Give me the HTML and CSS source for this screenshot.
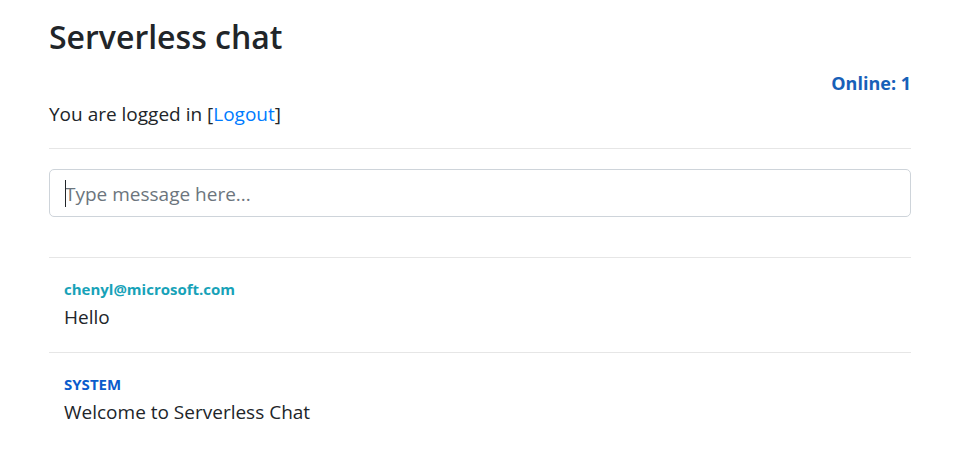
FILE: index.html
```html
<!DOCTYPE html>
<html lang="en">
<head>
<meta charset="utf-8">
<title>Serverless chat</title>
<link rel="stylesheet" href="styles.css">
</head>
<body>
<div class="container">
  <h1 class="title">Serverless chat</h1>
  <div class="online-row"><span class="online">Online: 1</span></div>
  <p class="lead">You are logged in [<a href="#" class="logout">Logout</a>]</p>
  <hr class="sep sep-top">
  <div class="input-wrap">
    <input class="message-input" type="text" placeholder="Type message here...">
  </div>
  <hr class="sep sep-list">
  <div class="message">
    <div class="sender sender-user">chenyl@microsoft.com</div>
    <div class="text">Hello</div>
  </div>
  <hr class="sep">
  <div class="message">
    <div class="sender sender-system">SYSTEM</div>
    <div class="text">Welcome to Serverless Chat</div>
  </div>
</div>
</body>
</html>
```
FILE: styles.css
```css
* { box-sizing: border-box; }
html, body { margin: 0; padding: 0; background: #fff; }
body {
  font-family: "Open Sans", "Noto Sans", "Liberation Sans", sans-serif;
  color: #212529;
}
.container {
  width: 862px;
  margin-left: 49px;
  padding-top: 13px;
}
.title {
  margin: 0 0 10px;
  font-size: 32px;
  line-height: 48px;
  font-weight: 600;
  color: #212529;
}
.online-row {
  display: flex;
  justify-content: flex-end;
  line-height: 24px;
  height: 24px;
}
.online {
  font-size: 18px;
  font-weight: 700;
  color: #1760b8;
}
.lead {
  margin: 4px 0 0;
  font-size: 19px;
  line-height: 30px;
}
.logout { color: #007bff; text-decoration: none; }
.sep {
  border: 0;
  border-top: 1px solid #e6e6e6;
  margin: 0;
  height: 0;
}
.sep-top { margin-top: 19px; }
.input-wrap {
  position: relative;
  margin-top: 20px;
}
.input-wrap::before {
  content: "";
  position: absolute;
  left: 16px;
  top: 11px;
  width: 1px;
  height: 27px;
  background: #212529;
}
.message-input {
  display: block;
  width: 100%;
  height: 48px;
  padding: 2px 15px 0;
  font-family: inherit;
  font-size: 19px;
  color: #495057;
  border: 1px solid #ced4da;
  border-radius: 5px;
  outline: none;
  background: #fff;
}
.message-input::placeholder { color: #6c757d; opacity: 1; }
.sep-list { margin-top: 40px; }
.message {
  padding: 20px 15px 20px;
}
.sender {
  font-size: 15px;
  line-height: 22px;
  font-weight: 700;
}
.sender-user { color: #17a2b8; }
.sender-system { color: #0a5ccc; }
.text {
  margin-top: 2px;
  font-size: 19px;
  line-height: 30px;
}
```
